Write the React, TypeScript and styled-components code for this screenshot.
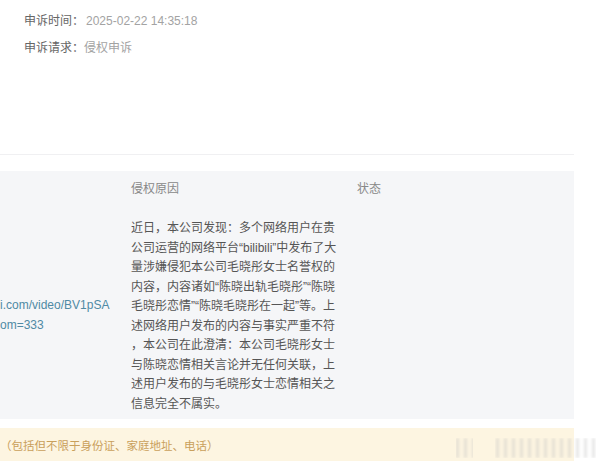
import React from "react";
import styled, { createGlobalStyle } from "styled-components";

const GlobalStyle = createGlobalStyle`
  html, body {
    margin: 0;
    padding: 0;
    background: #fff;
  }
  body {
    font-family: "Liberation Sans", "Noto Sans CJK SC", sans-serif;
    font-size: 12px;
    -webkit-font-smoothing: antialiased;
  }
`;

const Page = styled.div`
  position: relative;
  width: 600px;
  height: 461px;
  overflow: hidden;
`;

const Content = styled.div`
  width: 574px;
`;

const InfoSection = styled.section`
  height: 155px;
  padding: 7px 24px 0;
  box-sizing: border-box;
  border-bottom: 1px solid #f0f0f2;
  display: flex;
  flex-direction: column;
`;

const InfoRow = styled.div`
  display: flex;
  align-items: center;
  height: 27px;
  line-height: 18px;
`;

const Label = styled.span`
  color: #666;
`;

const Value = styled.span<{ $offset?: number }>`
  color: #a3a3a3;
  margin-left: ${(p) => p.$offset ?? 0}px;
`;

const Panel = styled.div`
  margin-top: 16px;
  background: #f5f6f8;
  padding: 8px 0 5px;
`;

const TableRow = styled.div<{ $gap?: number }>`
  display: grid;
  grid-template-columns: 131px 226px 1fr;
  margin-top: ${(p) => p.$gap ?? 0}px;
`;

const HeadCell = styled.div`
  color: #888;
  line-height: 20px;
`;

const LinkCell = styled.div`
  display: flex;
  flex-direction: column;
  justify-content: center;
  padding-bottom: 3px;
`;

const LinkLine = styled.span`
  display: block;
  color: #4f8aa4;
  line-height: 20px;
  white-space: nowrap;
`;

const ReasonCell = styled.div`
  color: #555;
  line-height: 19.5px;
`;

const ReasonLine = styled.span`
  display: block;
  white-space: nowrap;
`;

const Notice = styled.div`
  margin-top: 9px;
  height: 40px;
  background: #fdf5e1;
  color: #c9a05c;
  font-size: 11.5px;
  display: flex;
  align-items: center;
  padding: 0 0 6px;
  box-sizing: border-box;
`;

const Watermark = styled.div`
  position: absolute;
  left: 456px;
  top: 438px;
  width: 140px;
  height: 20px;
  filter: blur(1.5px);
  opacity: 0.4;
  background: repeating-linear-gradient(
    90deg,
    #bdbdbd 0 3px,
    transparent 3px 8px
  );
  -webkit-mask-image: linear-gradient(90deg, #000 0 12%, transparent 12% 28%, #000 28% 100%);
  mask-image: linear-gradient(90deg, #000 0 12%, transparent 12% 28%, #000 28% 100%);
`;

const reasonLines = [
  "近日，本公司发现：多个网络用户在贵",
  "公司运营的网络平台“bilibili”中发布了大",
  "量涉嫌侵犯本公司毛晓彤女士名誉权的",
  "内容，内容诸如“陈晓出轨毛晓彤”“陈晓",
  "毛晓彤恋情”“陈晓毛晓彤在一起”等。上",
  "述网络用户发布的内容与事实严重不符",
  "，本公司在此澄清：本公司毛晓彤女士",
  "与陈晓恋情相关言论并无任何关联，上",
  "述用户发布的与毛晓彤女士恋情相关之",
  "信息完全不属实。",
];

export default function App() {
  return (
    <Page>
      <GlobalStyle />
      <Content>
        <InfoSection>
          <InfoRow>
            <Label>申诉时间：</Label>
            <Value $offset={2}>2025-02-22 14:35:18</Value>
          </InfoRow>
          <InfoRow>
            <Label>申诉请求：</Label>
            <Value>侵权申诉</Value>
          </InfoRow>
        </InfoSection>

        <Panel>
          <TableRow>
            <div />
            <HeadCell>侵权原因</HeadCell>
            <HeadCell>状态</HeadCell>
          </TableRow>
          <TableRow $gap={20}>
            <LinkCell>
              <LinkLine>i.com/video/BV1pSA</LinkLine>
              <LinkLine>om=333</LinkLine>
            </LinkCell>
            <ReasonCell>
              {reasonLines.map((line) => (
                <ReasonLine key={line}>{line}</ReasonLine>
              ))}
            </ReasonCell>
            <div />
          </TableRow>
        </Panel>

        <Notice>（包括但不限于身份证、家庭地址、电话）</Notice>
      </Content>
      <Watermark />
    </Page>
  );
}
